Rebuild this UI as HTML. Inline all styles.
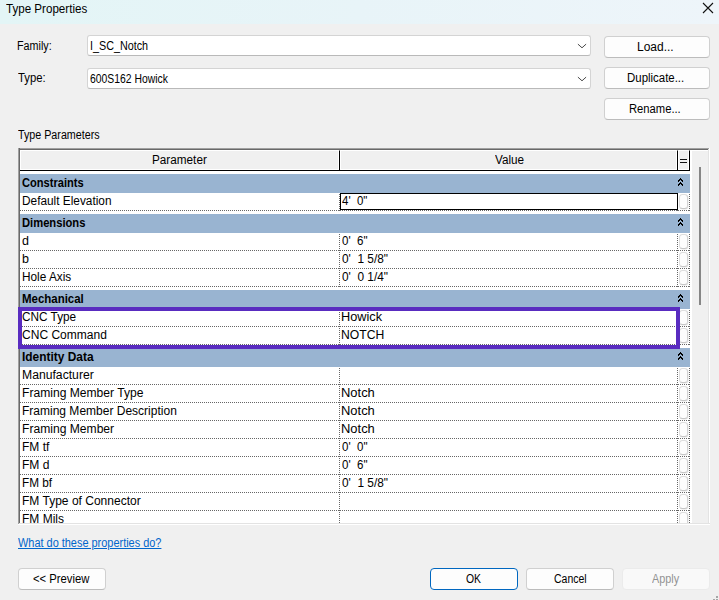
<!DOCTYPE html>
<html>
<head>
<meta charset="utf-8">
<title>Type Properties</title>
<style>
html,body{margin:0;padding:0;}
body{width:719px;height:600px;overflow:hidden;background:#f0f0f0;font-family:"Liberation Sans",sans-serif;font-size:12px;color:#000;position:relative;}
.abs{position:absolute;}
.t{position:absolute;white-space:nowrap;line-height:14px;transform-origin:0 50%;}
#titlebar{left:0;top:0;width:719px;height:24px;background:linear-gradient(90deg,#e3f5f6 0%,#e8f4f8 50%,#eef5fa 100%);}
.combo{position:absolute;left:87px;width:502px;height:19px;background:#fff;border:1px solid #d4d4d4;border-bottom-color:#b9b9b9;border-radius:3px;}
.btn{position:absolute;height:20px;background:#fdfdfd;border:1px solid #d0d0d0;border-bottom-color:#bcbcbc;border-radius:4px;}
#grid{left:18px;top:148px;width:692px;height:377px;overflow:hidden;background:#fff;}
#gtop{left:0;top:0;width:691px;height:2px;background:linear-gradient(180deg,#a0a0a0 0 1px,#696969 1px 2px);}
#gleft{left:0;top:0;width:2px;height:376px;background:linear-gradient(90deg,#a0a0a0 0 1px,#696969 1px 2px);}
#gright{left:690px;top:1px;width:2px;height:376px;background:linear-gradient(90deg,#e3e3e3 0 1px,#fff 1px 2px);}
#gbot{left:1px;top:375px;width:691px;height:2px;background:linear-gradient(180deg,#e3e3e3 0 1px,#fff 1px 2px);}
#sb{left:674px;top:3px;width:16px;height:372px;background:#f0f0f0;}
#thumb{left:681px;top:19px;width:2px;height:138px;background:#868686;}
.hd{position:absolute;top:2px;background:#f0f0f0;border-top:1px solid #fff;border-left:1px solid #fff;border-bottom:1px solid #000;border-right:1px solid #000;box-sizing:border-box;height:21px;box-shadow:inset -1px -1px 0 #fff;}
.sec{position:absolute;left:2px;width:670px;height:19px;background:#99b4d1;}
.chev{position:absolute;left:658px;top:4px;}
.row{position:absolute;left:2px;width:670px;height:18px;background:#fff repeating-linear-gradient(90deg,#666 0 1px,transparent 1px 2px) 0 17px/100% 1px no-repeat;}
.row .vd{position:absolute;left:319px;top:0;width:1px;height:18px;background:repeating-linear-gradient(180deg,transparent 0 1px,#666 1px 2px);}
.row .cb{position:absolute;left:657px;top:0;width:13px;height:18px;background:repeating-linear-gradient(180deg,transparent 0 1px,#666 1px 2px) 0 0/1px 100% no-repeat,repeating-linear-gradient(180deg,transparent 0 1px,#666 1px 2px) 12px 0/1px 100% no-repeat;}
.row .cb:after{content:"";position:absolute;left:2px;top:1px;width:9px;height:15px;border-radius:3.5px;background:#fdfdfd;border:1px solid #dedede;border-bottom-color:#c6c6c6;border-right-color:#d2d2d2;box-sizing:border-box;box-shadow:0.5px 0.5px 0.5px rgba(0,0,0,0.10);}
#edit{left:322px;top:45px;width:338px;height:17px;border:1px solid #000;box-sizing:border-box;background:#fff;}
#hl{left:18px;top:307px;width:662px;height:42px;border:4px solid #592cc0;box-sizing:border-box;}
</style>
</head>
<body>
<div id="titlebar" class="abs"></div>
<div class="t" style="left:6.43px;top:1px;font-size:12px;line-height:16px;transform:scaleX(0.9666);">Type Properties</div>
<svg class="abs" style="left:702px;top:2px" width="12" height="12" viewBox="0 0 12 12"><path d="M1 1 L11 11 M11 1 L1 11" stroke="#111" stroke-width="1.1" fill="none"/></svg>

<div class="t" style="left:16.80px;top:39px;font-size:12px;line-height:14px;transform:scaleX(0.8979);">Family:</div>
<div class="t" style="left:17.93px;top:71px;font-size:12px;line-height:14px;transform:scaleX(0.9427);">Type:</div>
<div class="combo" style="top:35px;"><svg class="abs" style="left:489px;top:7px" width="10" height="6" viewBox="0 0 10 6"><path d="M0.9 1.1 L5 4.8 L9.1 1.1" stroke="#4a4a4a" stroke-width="1" fill="none"/></svg></div>
<div class="combo" style="top:68px;"><svg class="abs" style="left:489px;top:7px" width="10" height="6" viewBox="0 0 10 6"><path d="M0.9 1.1 L5 4.8 L9.1 1.1" stroke="#4a4a4a" stroke-width="1" fill="none"/></svg></div>
<div class="t" style="left:89.58px;top:39px;font-size:12px;line-height:14px;transform:scaleX(0.8973);">I_SC_Notch</div>
<div class="t" style="left:90.25px;top:72px;font-size:12px;line-height:14px;transform:scaleX(0.8645);">600S162 Howick</div>

<div class="btn" style="left:604px;top:36px;width:104px;"></div><div class="t" style="left:637.00px;top:40px;font-size:12px;line-height:14px;transform:scaleX(0.9989);">Load...</div>
<div class="btn" style="left:604px;top:67px;width:104px;"></div><div class="t" style="left:627.15px;top:71px;font-size:12px;line-height:14px;transform:scaleX(0.9534);">Duplicate...</div>
<div class="btn" style="left:604px;top:98px;width:104px;"></div><div class="t" style="left:629.37px;top:102px;font-size:12px;line-height:14px;transform:scaleX(0.9346);">Rename...</div>

<div class="t" style="left:17.94px;top:128px;font-size:12px;line-height:14px;transform:scaleX(0.8933);">Type Parameters</div>

<div id="grid" class="abs">
<div class="hd" style="left:2px;width:320px;"></div>
<div class="hd" style="left:322px;width:338px;"></div>
<div class="hd" style="left:660px;width:12px;"></div>
<div class="sec" style="top:26px"><svg class="chev" width="5" height="8" viewBox="0 0 5 8" shape-rendering="crispEdges"><path d="M2 0h1v1h1v1h1v2h-1v-1h-1v-1h-1v1h-1v1h-1v-2h1v-1h1z M2 4h1v1h1v1h1v2h-1v-1h-1v-1h-1v1h-1v1h-1v-2h1v-1h1z" fill="#000"/></svg></div>
<div class="row" style="top:45px"><i class="vd"></i><i class="cb"></i></div>
<div class="sec" style="top:66px"><svg class="chev" width="5" height="8" viewBox="0 0 5 8" shape-rendering="crispEdges"><path d="M2 0h1v1h1v1h1v2h-1v-1h-1v-1h-1v1h-1v1h-1v-2h1v-1h1z M2 4h1v1h1v1h1v2h-1v-1h-1v-1h-1v1h-1v1h-1v-2h1v-1h1z" fill="#000"/></svg></div>
<div class="row" style="top:85px"><i class="vd"></i><i class="cb"></i></div>
<div class="row" style="top:103px"><i class="vd"></i><i class="cb"></i></div>
<div class="row" style="top:121px"><i class="vd"></i><i class="cb"></i></div>
<div class="sec" style="top:142px"><svg class="chev" width="5" height="8" viewBox="0 0 5 8" shape-rendering="crispEdges"><path d="M2 0h1v1h1v1h1v2h-1v-1h-1v-1h-1v1h-1v1h-1v-2h1v-1h1z M2 4h1v1h1v1h1v2h-1v-1h-1v-1h-1v1h-1v1h-1v-2h1v-1h1z" fill="#000"/></svg></div>
<div class="row" style="top:161px"><i class="vd"></i><i class="cb"></i></div>
<div class="row" style="top:179px"><i class="vd"></i><i class="cb"></i></div>
<div class="sec" style="top:200px"><svg class="chev" width="5" height="8" viewBox="0 0 5 8" shape-rendering="crispEdges"><path d="M2 0h1v1h1v1h1v2h-1v-1h-1v-1h-1v1h-1v1h-1v-2h1v-1h1z M2 4h1v1h1v1h1v2h-1v-1h-1v-1h-1v1h-1v1h-1v-2h1v-1h1z" fill="#000"/></svg></div>
<div class="row" style="top:219px"><i class="vd"></i><i class="cb"></i></div>
<div class="row" style="top:237px"><i class="vd"></i><i class="cb"></i></div>
<div class="row" style="top:255px"><i class="vd"></i><i class="cb"></i></div>
<div class="row" style="top:273px"><i class="vd"></i><i class="cb"></i></div>
<div class="row" style="top:291px"><i class="vd"></i><i class="cb"></i></div>
<div class="row" style="top:309px"><i class="vd"></i><i class="cb"></i></div>
<div class="row" style="top:327px"><i class="vd"></i><i class="cb"></i></div>
<div class="row" style="top:345px"><i class="vd"></i><i class="cb"></i></div>
<div class="row" style="top:363px"><i class="vd"></i><i class="cb"></i></div>
<div class="abs" style="left:2px;top:22px;width:670px;height:1px;background:#000"></div>
<div id="edit" class="abs"></div>
<div id="sb" class="abs"></div>
<div id="thumb" class="abs"></div>
<div id="gtop" class="abs"></div>
<div id="gleft" class="abs"></div>
<div id="gright" class="abs"></div>
<div id="gbot" class="abs"></div>
</div>
<div class="t" style="left:152.12px;top:153px;font-size:12px;line-height:14px;transform:scaleX(0.9785);">Parameter</div>
<div class="t" style="left:494.93px;top:153px;font-size:12px;line-height:14px;transform:scaleX(0.9760);">Value</div>
<div class="abs" style="left:680.3px;top:159px;width:6.5px;height:1px;background:#111"></div><div class="abs" style="left:680.3px;top:162px;width:6.5px;height:1px;background:#111"></div>
<div class="t" style="left:22.30px;top:176px;font-size:12.5px;line-height:15px;transform:scaleX(0.8870);font-weight:bold;">Constraints</div>
<div class="t" style="left:21.55px;top:194px;font-size:12.5px;line-height:15px;transform:scaleX(0.9469);">Default Elevation</div>
<div class="t" style="left:342.22px;top:194px;font-size:12.5px;line-height:15px;transform:scaleX(0.9173);white-space:pre;">4'  0&quot;</div>
<div class="t" style="left:22.17px;top:216px;font-size:12.5px;line-height:15px;transform:scaleX(0.8948);font-weight:bold;">Dimensions</div>
<div class="t" style="left:22px;top:234px;font-size:12.5px;line-height:15px;">d</div>
<div class="t" style="left:342.11px;top:234px;font-size:12.5px;line-height:15px;transform:scaleX(0.9213);white-space:pre;">0'  6&quot;</div>
<div class="t" style="left:22px;top:252px;font-size:12.5px;line-height:15px;">b</div>
<div class="t" style="left:342.11px;top:252px;font-size:12.5px;line-height:15px;transform:scaleX(0.9480);white-space:pre;">0'  1 5/8&quot;</div>
<div class="t" style="left:21.56px;top:270px;font-size:12.5px;line-height:15px;transform:scaleX(0.9441);">Hole Axis</div>
<div class="t" style="left:342.11px;top:270px;font-size:12.5px;line-height:15px;transform:scaleX(0.9480);white-space:pre;">0'  0 1/4&quot;</div>
<div class="t" style="left:22.16px;top:292px;font-size:12.5px;line-height:15px;transform:scaleX(0.9166);font-weight:bold;">Mechanical</div>
<div class="t" style="left:22.22px;top:310px;font-size:12.5px;line-height:15px;transform:scaleX(0.9435);">CNC Type</div>
<div class="t" style="left:341.28px;top:310px;font-size:12.5px;line-height:15px;transform:scaleX(1.0179);white-space:pre;">Howick</div>
<div class="t" style="left:22.21px;top:328px;font-size:12.5px;line-height:15px;transform:scaleX(0.9630);">CNC Command</div>
<div class="t" style="left:341.33px;top:328px;font-size:12.5px;line-height:15px;transform:scaleX(0.9723);white-space:pre;">NOTCH</div>
<div class="t" style="left:22.14px;top:350px;font-size:12.5px;line-height:15px;transform:scaleX(0.9536);font-weight:bold;">Identity Data</div>
<div class="t" style="left:21.53px;top:368px;font-size:12.5px;line-height:15px;transform:scaleX(0.9748);">Manufacturer</div>
<div class="t" style="left:21.53px;top:386px;font-size:12.5px;line-height:15px;transform:scaleX(0.9677);">Framing Member Type</div>
<div class="t" style="left:341.26px;top:386px;font-size:12.5px;line-height:15px;transform:scaleX(1.0355);white-space:pre;">Notch</div>
<div class="t" style="left:21.54px;top:404px;font-size:12.5px;line-height:15px;transform:scaleX(0.9606);">Framing Member Description</div>
<div class="t" style="left:341.26px;top:404px;font-size:12.5px;line-height:15px;transform:scaleX(1.0355);white-space:pre;">Notch</div>
<div class="t" style="left:21.53px;top:422px;font-size:12.5px;line-height:15px;transform:scaleX(0.9681);">Framing Member</div>
<div class="t" style="left:341.26px;top:422px;font-size:12.5px;line-height:15px;transform:scaleX(1.0355);white-space:pre;">Notch</div>
<div class="t" style="left:21.54px;top:440px;font-size:12.5px;line-height:15px;transform:scaleX(0.9599);">FM tf</div>
<div class="t" style="left:342.11px;top:440px;font-size:12.5px;line-height:15px;transform:scaleX(0.9213);white-space:pre;">0'  0&quot;</div>
<div class="t" style="left:21.53px;top:458px;font-size:12.5px;line-height:15px;transform:scaleX(0.9656);">FM d</div>
<div class="t" style="left:342.11px;top:458px;font-size:12.5px;line-height:15px;transform:scaleX(0.9213);white-space:pre;">0'  6&quot;</div>
<div class="t" style="left:21.56px;top:476px;font-size:12.5px;line-height:15px;transform:scaleX(0.9435);">FM bf</div>
<div class="t" style="left:342.11px;top:476px;font-size:12.5px;line-height:15px;transform:scaleX(0.9480);white-space:pre;">0'  1 5/8&quot;</div>
<div class="t" style="left:21.54px;top:494px;font-size:12.5px;line-height:15px;transform:scaleX(0.9617);">FM Type of Connector</div>
<div class="t" style="left:21.54px;top:512px;font-size:12.5px;line-height:15px;transform:scaleX(0.9601);">FM Mils</div>
<div id="hl" class="abs"></div>

<div class="t" style="left:17.66px;top:536px;font-size:12px;line-height:14px;transform:scaleX(0.9111);color:#0066cc;text-decoration:underline;">What do these properties do?</div>

<div class="btn" style="left:18px;top:568px;width:86px;"></div><div class="t" style="left:33.05px;top:572px;font-size:12px;line-height:14px;transform:scaleX(0.9380);">&lt;&lt; Preview</div>
<div class="btn" style="left:430px;top:568px;width:86px;border-color:#0067c0;"></div><div class="t" style="left:466.28px;top:572px;font-size:12px;line-height:14px;transform:scaleX(0.8674);">OK</div>
<div class="btn" style="left:526px;top:568px;width:86px;"></div><div class="t" style="left:553.75px;top:572px;font-size:12px;line-height:14px;transform:scaleX(0.8736);">Cancel</div>
<div class="btn" style="left:622px;top:568px;width:86px;background:#f9f9f9;border-color:#ebebeb;"></div><div class="t" style="left:651.94px;top:572px;font-size:12px;line-height:14px;transform:scaleX(0.9029);color:#939393;">Apply</div>
<div class="abs" style="left:716px;top:596px;width:2px;height:2px;background:#a6a6a6"></div><div class="abs" style="left:713px;top:599px;width:2px;height:2px;background:#a6a6a6"></div><div class="abs" style="left:716px;top:599px;width:2px;height:2px;background:#a6a6a6"></div></body>
</html>
